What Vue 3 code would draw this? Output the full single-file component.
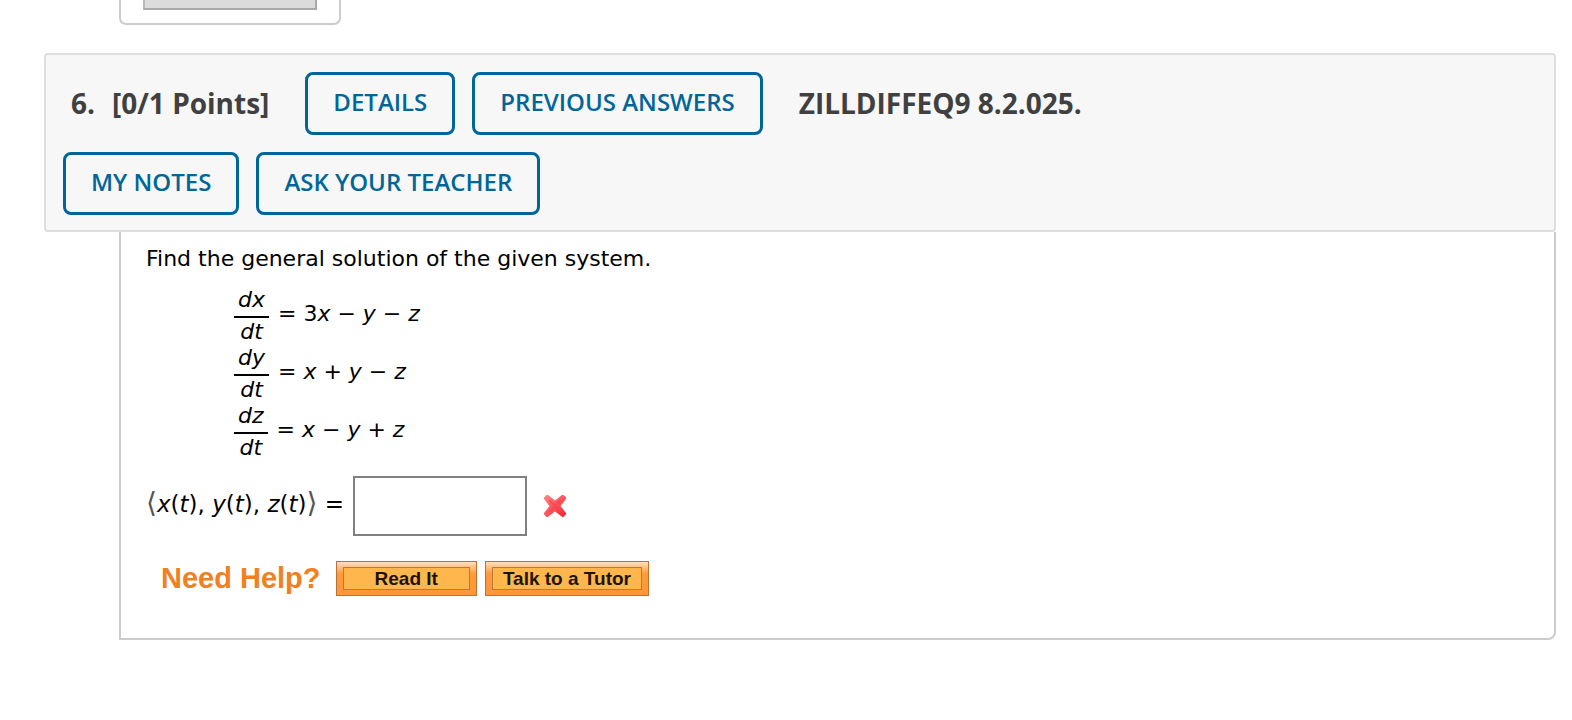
<script setup>
import { ref } from 'vue'

const answer = ref('')
const equations = [
  { top: 'dx', bottom: 'dt', lead: '3', right: 'x − y − z' },
  { top: 'dy', bottom: 'dt', lead: '', right: 'x + y − z' },
  { top: 'dz', bottom: 'dt', lead: '', right: 'x − y + z' },
]
</script>

<template>
  <main class="page">
    <div class="previous">
      <button class="submit" type="button" aria-label="Submit Answer"></button>
    </div>

    <section class="question">
      <header class="head">
        <div class="row">
          <h2 class="title"><span>6.</span><span>[0/1 Points]</span></h2>
          <button class="btn" type="button">DETAILS</button>
          <button class="btn" type="button">PREVIOUS ANSWERS</button>
          <strong class="source">ZILLDIFFEQ9 8.2.025.</strong>
        </div>
        <div class="row">
          <button class="btn" type="button">MY NOTES</button>
          <button class="btn" type="button">ASK YOUR TEACHER</button>
        </div>
      </header>

      <div class="body">
        <p class="prompt">Find the general solution of the given system.</p>

        <div class="system">
          <div v-for="eq in equations" :key="eq.top" class="equation">
            <span class="fraction">
              <i class="num">{{ eq.top }}</i>
              <i class="den">{{ eq.bottom }}</i>
            </span>
            <span class="rhs">= {{ eq.lead }}<i>{{ eq.right }}</i></span>
          </div>
        </div>

        <div class="answer">
          <label for="answer" class="label"><span class="angle">⟨</span><i>x</i>(<i>t</i>), <i>y</i>(<i>t</i>), <i>z</i>(<i>t</i>)<span class="angle">⟩</span> =</label>
          <input id="answer" v-model="answer" class="field" type="text" />
          <svg class="wrong" viewBox="0 0 24 24" role="img" aria-label="Incorrect">
            <defs>
              <linearGradient id="wrong-fill" x1="0" y1="0" x2="1" y2="1">
                <stop offset="0" stop-color="#ff8585" />
                <stop offset="0.55" stop-color="#fb5158" />
                <stop offset="1" stop-color="#f0222f" />
              </linearGradient>
            </defs>
            <path
              d="M5 1 L12 6.500 L19 1 Q20 .4 21 1.4 L23 3.5 Q23.6 4.5 22.8 5.3 L17.500 12 L22.800 18.700 Q23.600 19.500 22.800 20.500 L20.700 22.800 Q19.800 23.500 19 22.800 L12 17.500 L5 22.800 Q4.200 23.500 3.300 22.800 L1.200 20.500 Q.4 19.500 1.200 18.700 L6.500 12 L1.200 5.300 Q.4 4.500 1 3.500 L3 1.400 Q4 .4 5 1 Z"
              fill="url(#wrong-fill)"
            />
            <path d="M7 7 L17 17 M17 7 L7 17" stroke="#f63f4a" stroke-width="2" stroke-linecap="round" opacity=".6" />
          </svg>
        </div>

        <div class="help">
          <span class="help-title">Need Help?</span>
          <button class="help-btn" type="button"><span class="face read">Read It</span></button>
          <button class="help-btn" type="button"><span class="face">Talk to a Tutor</span></button>
        </div>
      </div>
    </section>
  </main>
</template>

<style>
body {
  margin: 0;
  background: #fff;
}
</style>

<style scoped>
.page {
  padding: 0 16px 80px 44px;
  font-family: Verdana, "DejaVu Sans", sans-serif;
  font-size: 22px;
  color: #000;
}
.previous {
  box-sizing: border-box;
  width: 222px;
  margin-left: 75px;
  padding: 0 22px 13px;
  border: 2px solid #ccc;
  border-top: 0;
  border-radius: 0 0 7px 7px;
}
.submit {
  display: block;
  width: 100%;
  height: 10px;
  padding: 0;
  background: #dcdcdc;
  border: 2px solid #a9a9a9;
  border-top: 0;
  border-left-color: #bbb;
  border-radius: 0;
}
.question {
  margin-top: 28px;
}
.head {
  display: flex;
  flex-direction: column;
  gap: 17px;
  padding: 17px 17px 15px;
  background: #f7f7f7;
  border: 2px solid #dedede;
  border-radius: 4px;
  font-family: "Open Sans", sans-serif;
}
.row {
  display: flex;
  align-items: center;
  gap: 17px;
}
.title,
.source {
  padding-bottom: 2px;
  font-size: 28px;
  line-height: 38px;
  font-weight: 700;
  color: #404040;
  white-space: nowrap;
}
.title {
  display: flex;
  gap: 17px;
  margin: 0;
  padding-right: 19px;
  padding-left: 8px;
}
.source {
  padding-left: 19px;
}
.btn {
  padding: 12px 25px 16px;
  font: 600 24px/29px "Open Sans", sans-serif;
  color: #069;
  background: transparent;
  border: 3px solid #069;
  border-radius: 8px;
  white-space: nowrap;
}
.body {
  margin-left: 75px;
  padding: 13px 25px 42px;
  border: 2px solid #ccc;
  border-top: 0;
  border-radius: 0 0 8px 0;
}
.prompt {
  margin: 0;
  line-height: 28px;
}
.system {
  padding: 15px 0 0 88px;
}
.equation {
  display: flex;
  align-items: flex-start;
  gap: 9px;
}
.fraction {
  display: flex;
  flex-direction: column;
  text-align: center;
}
.num {
  padding: 0 4px 4px;
  line-height: 24px;
  border-bottom: 2px solid #000;
}
.den {
  line-height: 28px;
}
.rhs {
  line-height: 52px;
}
.answer {
  display: flex;
  align-items: center;
  gap: 9px;
  margin-top: 14px;
}
.label {
  padding-bottom: 5px;
  font-size: 23px;
  line-height: 32px;
  white-space: nowrap;
}
.angle {
  font-size: 28px;
  color: #555;
}
.field {
  box-sizing: border-box;
  width: 174px;
  height: 60px;
  padding: 0 8px;
  font: inherit;
  background: #fff;
  border: 2px solid #808080;
  border-radius: 0;
}
.wrong {
  width: 24px;
  height: 24px;
  margin-left: 7px;
}
.help {
  display: flex;
  align-items: center;
  gap: 8px;
  margin: 25px 0 0 15px;
  font-family: "Liberation Sans", Arial, sans-serif;
  font-weight: 700;
}
.help-title {
  padding-bottom: 2px;
  margin-right: 7px;
  font-size: 29px;
  line-height: 32px;
  color: #f08020;
}
.help-btn {
  padding: 5px 6px;
  font: inherit;
  color: #1c1400;
  background: linear-gradient(#ffe0c0, #ff9a3c 35%, #ff963a);
  border: 1px solid #b87333;
}
.face {
  display: block;
  padding: 0 10px;
  font-size: 19px;
  line-height: 21px;
  background: #ffb74d;
  border: 1px solid #b87a38;
}
.read {
  padding: 0 31px;
}
</style>
